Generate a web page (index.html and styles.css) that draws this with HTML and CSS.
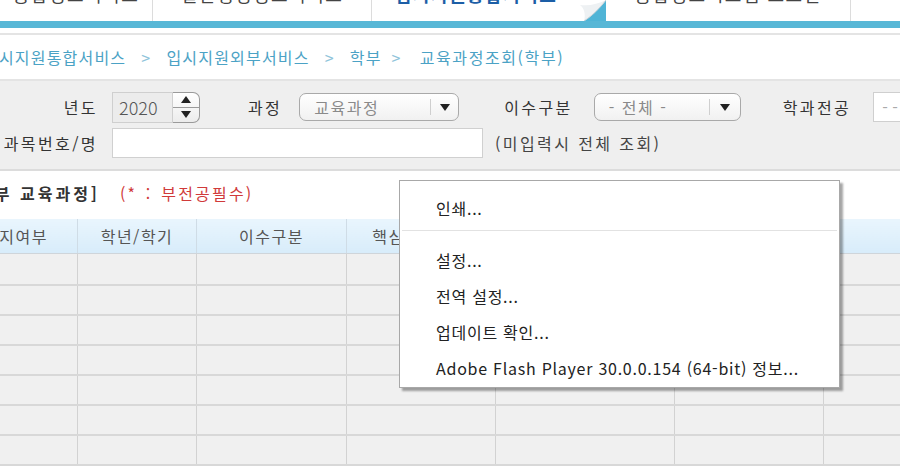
FILE: index.html
```html
<!DOCTYPE html>
<html lang="ko">
<head>
<meta charset="utf-8">
<link rel="stylesheet" href="styles.css">
</head>
<body>
<div class="tabs">
  <div class="tab t1"><span>통합정보서비스</span></div>
  <div class="tab t2"><span>일반행정정보서비스</span></div>
  <div class="tab t3 active"><span>입시지원통합서비스</span>
    <svg class="curl" width="28" height="21" viewBox="0 0 28 21">
      <polygon points="28,0 28,21 6,21" fill="#4fb4d6"/>
      <path d="M28,0 C22,8 14,16 6,21 C8,14 6,8 2,5 C12,6 20,4 28,0 Z" fill="#eef1f3"/>
      <path d="M28,0 C22,8 14,16 6,21" stroke="#c9d3d9" stroke-width="1" fill="none"/>
    </svg>
  </div>
  <div class="tab t4"><span>종합정보시스템 로그인</span></div>
  <div class="tab-rest"></div>
</div>
<div class="bluebar"></div>
<div class="crumbs">
  <span class="cr first">입시지원통합서비스</span><span class="sep">&gt;</span>
  <span class="cr">입시지원외부서비스</span><span class="sep">&gt;</span>
  <span class="cr">학부</span><span class="sep sep-last">&gt;</span>
  <span class="cr last">교육과정조회(학부)</span>
</div>
<div class="filters">
  <div class="frow r1">
    <span class="lbl lbl-first">년도</span>
    <div class="spin">
      <div class="spin-val">2020</div>
      <div class="spin-btns">
        <div class="sb up"><svg width="10" height="7" viewBox="0 0 10 7"><polygon points="5,0 10,7 0,7" fill="#222"/></svg></div>
        <div class="sb dn"><svg width="10" height="7" viewBox="0 0 10 7"><polygon points="0,0 10,0 5,7" fill="#222"/></svg></div>
      </div>
    </div>
    <span class="lbl lbl-course">과정</span>
    <div class="sel sel-course"><span class="sel-txt">교육과정</span><span class="sel-arrow"><svg width="10" height="7" viewBox="0 0 10 7"><polygon points="0,0 10,0 5,7" fill="#222"/></svg></span></div>
    <span class="lbl lbl-type">이수구분</span>
    <div class="sel sel-type"><span class="sel-txt">- 전체 -</span><span class="sel-arrow"><svg width="10" height="7" viewBox="0 0 10 7"><polygon points="0,0 10,0 5,7" fill="#222"/></svg></span></div>
    <span class="lbl lbl-major">학과전공</span>
    <div class="inp-major">- -</div>
  </div>
  <div class="frow r2">
    <span class="lbl lbl-first lbl-subj">과목번호/명</span>
    <div class="inp-subj"></div>
    <span class="hint">(미입력시 전체 조회)</span>
  </div>
</div>
<div class="title-row">
  <span class="title">[학부 교육과정]</span>
  <span class="note">(* : 부전공필수)</span>
</div>
<table class="grid">
  <colgroup>
    <col class="c0"><col class="c1"><col class="c2"><col class="c3"><col class="c4"><col class="c5"><col class="c6">
  </colgroup>
  <thead>
    <tr><th>유지여부</th><th>학년/학기</th><th>이수구분</th><th>핵심교양영역</th><th>교과목명</th><th>학점</th><th></th></tr>
  </thead>
  <tbody>
    <tr class="row-first"><td></td><td></td><td></td><td></td><td></td><td></td><td></td></tr>
    <tr><td></td><td></td><td></td><td></td><td></td><td></td><td></td></tr>
    <tr><td></td><td></td><td></td><td></td><td></td><td></td><td></td></tr>
    <tr><td></td><td></td><td></td><td></td><td></td><td></td><td></td></tr>
    <tr><td></td><td></td><td></td><td></td><td></td><td></td><td></td></tr>
    <tr><td></td><td></td><td></td><td></td><td></td><td></td><td></td></tr>
    <tr><td></td><td></td><td></td><td></td><td></td><td></td><td></td></tr>
  </tbody>
</table>
<div class="ctx-menu">
  <div class="mi first">인쇄...</div>
  <div class="msep"></div>
  <div class="mi">설정...</div>
  <div class="mi">전역 설정...</div>
  <div class="mi">업데이트 확인...</div>
  <div class="mi">Adobe Flash Player 30.0.0.154 (64-bit) 정보...</div>
</div>
</body>
</html>
```
FILE: styles.css
```css
* { box-sizing: border-box; }
html, body {
  margin: 0;
  padding: 0;
  width: 900px;
  height: 469px;
  overflow: hidden;
  background: #fff;
  font-family: "Noto Sans CJK KR", "Noto Sans", sans-serif;
  color: #333;
  position: relative;
}

/* tabs */
.tabs {
  display: flex;
  height: 21px;
  background: #fff;
  overflow: hidden;
}
.tab {
  position: relative;
  height: 21px;
  display: flex;
  justify-content: center;
  overflow: hidden;
  border-right: 1px solid #dcdcdc;
  flex: none;
}
.tab span {
  font-size: 18px;
  line-height: 22px;
  margin-top: -17px;
  color: #444;
  white-space: nowrap;
  letter-spacing: 1.5px;
}
.t1 { width: 153px; }
.t2 { width: 219px; }
.t3 { width: 234px; border-right: none; padding-right: 26px; }
.t3 span { color: #1c5ea6; font-weight: bold; }
.t4 { width: 245px; }
.tab-rest { flex: 1; }
.curl { position: absolute; right: 0; top: 0; }

.bluebar {
  height: 7px;
  background: #58b7d6;
}

/* breadcrumb */
.crumbs {
  height: 48px;
  margin-top: 5px;
  border-top: 2px solid #e4e4e4;
  border-bottom: 2px solid #e4e4e4;
  display: flex;
  align-items: center;
  font-size: 16px;
  color: #4ba2c5;
  white-space: nowrap;
  letter-spacing: 1.2px;
}
.crumbs > span { flex: none; }
.cr.first { margin-left: -17px; }
.sep { margin: 0 15px; color: #8fc4da; }
.sep.sep-last { margin: 0 18px 0 10px; }
.cr.last { letter-spacing: 1.6px; }

/* filters */
.filters {
  background: #efefef;
  height: 90px;
  border-bottom: 2px solid #dcdcdc;
  padding-top: 10px;
}
.frow {
  display: flex;
  align-items: center;
  white-space: nowrap;
}
.frow > * { flex: none; }
.r1 { height: 32px; }
.r2 { height: 30px; margin-top: 5px; }
.lbl {
  font-size: 16px;
  color: #333;
  letter-spacing: 2.4px;
}
.lbl-first {
  width: 98px;
  text-align: right;
  margin-right: 14px;
}
.lbl-subj { margin-left: -14px; width: 112px; }

.spin {
  display: flex;
  width: 88px;
  height: 31px;
}
.spin-val {
  width: 61px;
  height: 31px;
  border: 1px solid #cfcfcf;
  background: #ececec;
  font-size: 18px;
  line-height: 28px;
  padding-left: 6px;
  color: #555;
  font-weight: 300;
}
.spin-btns {
  width: 27px;
  display: flex;
  flex-direction: column;
  border: 1px solid #9a9a9a;
  border-left: none;
  border-radius: 0 7px 7px 0;
  background: linear-gradient(#ffffff, #ececec);
  overflow: hidden;
}
.sb {
  flex: 1;
  display: flex;
  align-items: center;
  justify-content: center;
}
.sb.up { border-bottom: 1px solid #9a9a9a; }

.lbl-course { margin-left: 48px; }
.sel {
  height: 28px;
  border: 1px solid #a9a9a9;
  border-radius: 7px;
  background: linear-gradient(#ffffff, #f1f1f1);
  display: flex;
  align-items: center;
  font-size: 16px;
  color: #8a8a8a;
  letter-spacing: 1.5px;
}
.sel-txt { flex: 1; padding-left: 14px; }
.sel-arrow {
  width: 28px;
  height: 16px;
  border-left: 1px solid #cfcfcf;
  display: flex;
  align-items: center;
  justify-content: center;
}
.sel-course { width: 160px; margin-left: 17px; }
.lbl-type { margin-left: 45px; }
.sel-type { width: 147px; margin-left: 21px; }
.sel-type .sel-arrow { width: 31px; }
.lbl-major { margin-left: 42px; }
.inp-major {
  margin-left: 22px;
  width: 120px;
  height: 30px;
  border: 1px solid #cfcfcf;
  background: #fff;
  font-size: 16px;
  line-height: 28px;
  padding-left: 8px;
  color: #aaa;
}
.inp-subj {
  width: 371px;
  height: 30px;
  border: 1px solid #d0d0d0;
  background: #fff;
}
.hint {
  margin-left: 12px;
  font-size: 16px;
  color: #444;
  letter-spacing: 2.4px;
}

/* title */
.title-row {
  height: 48px;
  display: flex;
  align-items: center;
  white-space: nowrap;
  padding-bottom: 4px;
}
.title {
  font-size: 16px;
  font-weight: bold;
  color: #333;
  margin-left: -32px;
  letter-spacing: 3px;
}
.note {
  margin-left: 20px;
  font-size: 16px;
  color: #d03a3a;
  letter-spacing: 2.2px;
  word-spacing: 2px;
}

/* table */
.grid {
  border-collapse: collapse;
  table-layout: fixed;
  margin-left: -47px;
  width: 1000px;
}
.c0 { width: 124px; }
.c1 { width: 119px; }
.c2 { width: 150px; }
.c3 { width: 149px; }
.c4 { width: 179px; }
.c5 { width: 149px; }
.c6 { width: 130px; }
.grid th {
  height: 34px;
  background: linear-gradient(#e9f5fd, #d8ecfa);
  font-weight: normal;
  font-size: 16px;
  color: #555;
  border-left: 1px solid #cfdce6;
  border-bottom: 1px solid #cfd5da;
  padding: 0;
  white-space: nowrap;
  overflow: hidden;
  letter-spacing: 1.5px;
}
.grid td {
  height: 30px;
  background: #f0f0f0;
  border-left: 1px solid #d2d2d2;
  border-bottom: 2px solid #d8d8d8;
  padding: 0;
}
.grid tbody tr { height: 30px; }
.grid tbody tr.row-first { height: 32px; }
.grid tbody tr.row-first td { height: 32px; }

/* context menu */
.ctx-menu {
  position: absolute;
  left: 399px;
  top: 180px;
  width: 441px;
  height: 208px;
  background: #fff;
  border: 1px solid #a8a8a8;
  box-shadow: 3px 3px 2px rgba(0, 0, 0, 0.35);
  padding-top: 9px;
}
.mi {
  height: 36px;
  line-height: 36px;
  padding-left: 36px;
  font-size: 16px;
  color: #222;
  white-space: nowrap;
  letter-spacing: 0.75px;
}
.msep {
  height: 1px;
  background: #e2e2e2;
  margin: 4px 2px 11px 2px;
}
```
